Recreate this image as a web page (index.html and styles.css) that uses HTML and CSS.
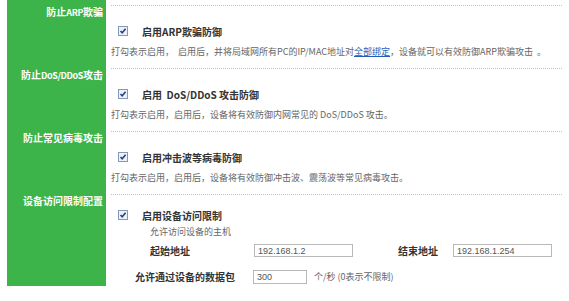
FILE: index.html
```html
<!DOCTYPE html>
<html>
<head>
    <meta charset="utf-8">
    <title>安全设置</title>
    <link rel="stylesheet" href="styles.css">
</head>
<body>
    <div class="panel">
        <div class="row">
            <div class="side">防止<span class="en">ARP</span>欺骗</div>
            <div class="main">
                <div class="opt">
                    <svg class="chk" width="10" height="10" viewBox="0 0 10 10"><rect x="0.5" y="0.5" width="9" height="9" fill="#eef2f7" stroke="#8499b8"/><path d="M2.5 5 L4.2 6.8 L7.6 2.8" fill="none" stroke="#23408e" stroke-width="1.6"/></svg>
                    <span class="opt-text">启用ARP欺骗防御</span>
                </div>
                <p class="desc">打勾表示启用，&nbsp; 启用后，并将局域网所有PC的IP/MAC地址对<a href="#">全部绑定</a>，设备就可以有效防御ARP欺骗攻击 &nbsp;。</p>
            </div>
        </div>

        <div class="row">
            <div class="side">防止<span class="en">DoS/DDoS</span>攻击</div>
            <div class="main">
                <div class="opt">
                    <svg class="chk" width="10" height="10" viewBox="0 0 10 10"><rect x="0.5" y="0.5" width="9" height="9" fill="#eef2f7" stroke="#8499b8"/><path d="M2.5 5 L4.2 6.8 L7.6 2.8" fill="none" stroke="#23408e" stroke-width="1.6"/></svg>
                    <span class="opt-text">启用&nbsp; DoS/DDoS 攻击防御</span>
                </div>
                <p class="desc">打勾表示启用，启用后，设备将有效防御内网常见的 DoS/DDoS 攻击。</p>
            </div>
        </div>

        <div class="row">
            <div class="side">防止常见病毒攻击</div>
            <div class="main">
                <div class="opt">
                    <svg class="chk" width="10" height="10" viewBox="0 0 10 10"><rect x="0.5" y="0.5" width="9" height="9" fill="#eef2f7" stroke="#8499b8"/><path d="M2.5 5 L4.2 6.8 L7.6 2.8" fill="none" stroke="#23408e" stroke-width="1.6"/></svg>
                    <span class="opt-text">启用冲击波等病毒防御</span>
                </div>
                <p class="desc">打勾表示启用，启用后，设备将有效防御冲击波、震荡波等常见病毒攻击。</p>
            </div>
        </div>

        <div class="row">
            <div class="side">设备访问限制配置</div>
            <div class="main last">
                <div class="opt">
                    <svg class="chk" width="10" height="10" viewBox="0 0 10 10"><rect x="0.5" y="0.5" width="9" height="9" fill="#eef2f7" stroke="#8499b8"/><path d="M2.5 5 L4.2 6.8 L7.6 2.8" fill="none" stroke="#23408e" stroke-width="1.6"/></svg>
                    <span class="opt-text">启用设备访问限制</span>
                </div>
                <div class="hosts">允许访问设备的主机</div>
                <div class="addr">
                    <span class="addr-label">起始地址</span>
                    <input class="ip" type="text" value="192.168.1.2">
                    <span class="addr-label end">结束地址</span>
                    <input class="ip" type="text" value="192.168.1.254">
                </div>
                <div class="packets">
                    <span class="pk-label">允许通过设备的数据包</span>
                    <input class="pk" type="text" value="300">
                    <span class="unit">个/秒 (0表示不限制)</span>
                </div>
            </div>
        </div>
    </div>
</body>
</html>
```

FILE: styles.css
```css
body {
    margin: 0;
    background: #fff;
    font-family: "Noto Sans CJK SC", "Liberation Sans", sans-serif;
}

.panel {
    margin: 0 7px;
}

.row {
    display: grid;
    grid-template-columns: 99px 1fr;
}

.side {
    background-color: #3db449;
    color: #fff;
    font-size: 10px;
    font-weight: bold;
    line-height: 12px;
    text-align: right;
    padding: 6px 3px 0 0;
    white-space: nowrap;
}

.side .en {
    font-size: 9px;
    letter-spacing: -0.4px;
}

.main {
    margin: 5px 0 0 5px;
    border-top: 1px dotted #b3cfa6;
    padding: 18px 0 4px 0;
}

.main.last {
    padding: 13px 0 2px 0;
}

.opt {
    display: flex;
    align-items: center;
    height: 14px;
    padding-left: 7px;
    margin-bottom: 7px;
}

.chk {
    flex: none;
}

.opt-text {
    margin-left: 14px;
    font-size: 10px;
    font-weight: bold;
    color: #333;
    white-space: pre;
}

.desc {
    margin: 0;
    font-size: 9px;
    line-height: 14px;
    color: #666;
    white-space: nowrap;
}

.desc a {
    color: #1f5fb8;
    text-decoration: underline;
}

.last .opt {
    margin-bottom: 3px;
}

.hosts {
    padding-left: 39px;
    font-size: 9px;
    line-height: 14px;
    color: #666;
}

.addr {
    display: flex;
    align-items: center;
    padding-left: 39px;
    margin-top: 4px;
}

.addr-label {
    width: 104px;
    font-size: 10px;
    font-weight: bold;
    color: #333;
}

.addr-label.end {
    width: 55px;
    margin-left: 45px;
}

.ip, .pk {
    box-sizing: border-box;
    height: 13px;
    border: 1px solid #b8b8b8;
    padding: 0 3px;
    font-family: "Liberation Sans", sans-serif;
    font-size: 9px;
    color: #555;
    outline: none;
}

.ip {
    width: 99px;
}

.packets {
    display: flex;
    align-items: center;
    padding-left: 24px;
    margin-top: 11px;
}

.pk-label {
    width: 118px;
    font-size: 10px;
    font-weight: bold;
    color: #333;
}

.pk {
    width: 54px;
    height: 14px;
}

.unit {
    margin-left: 7px;
    font-size: 9px;
    color: #666;
}
```
